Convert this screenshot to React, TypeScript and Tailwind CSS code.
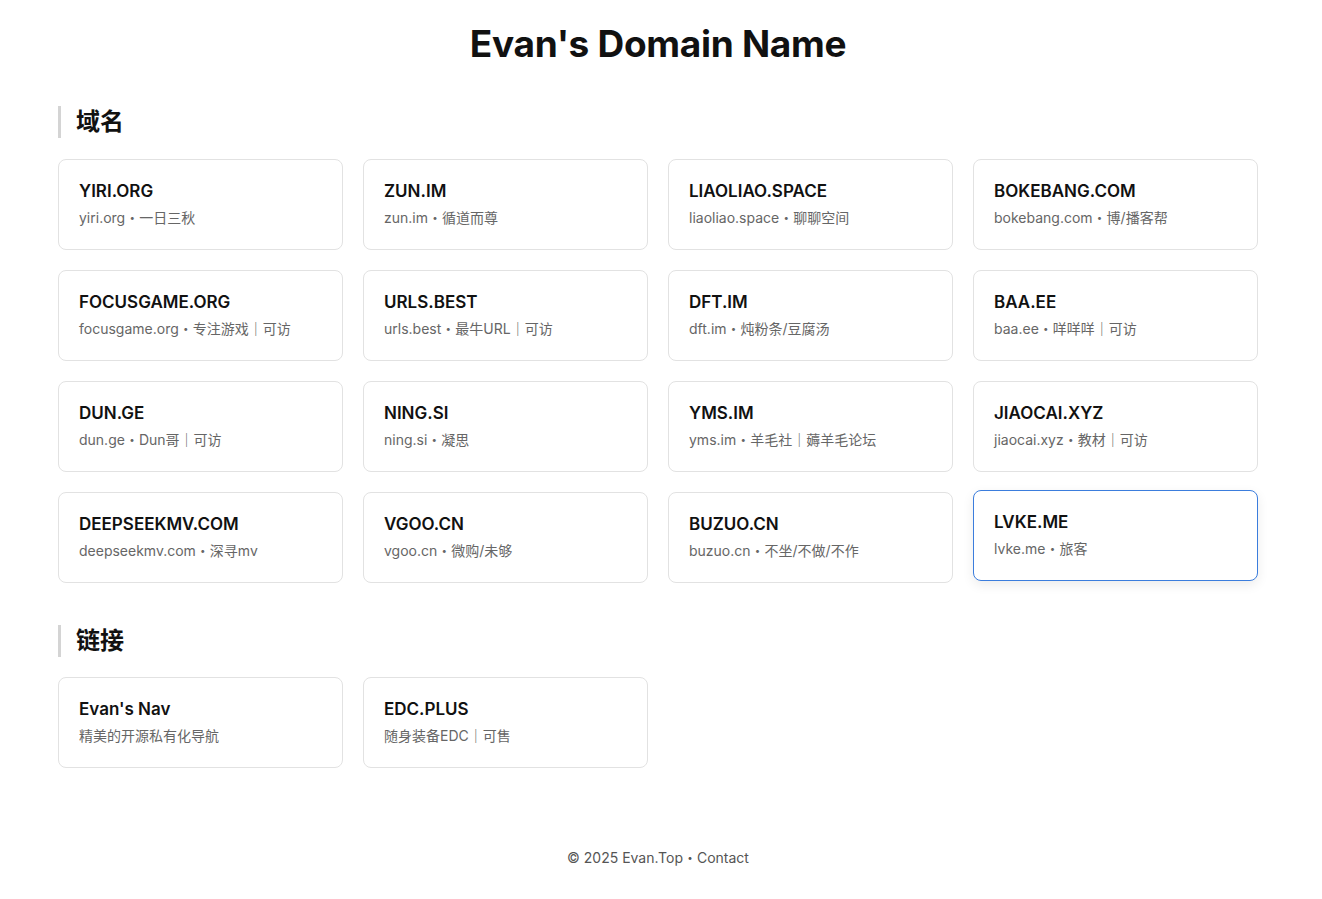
import React from "react";

type Item = { title: string; desc: string; hover?: boolean };

const domains: Item[] = [
  { title: "YIRI.ORG", desc: "yiri.org・一日三秋" },
  { title: "ZUN.IM", desc: "zun.im・循道而尊" },
  { title: "LIAOLIAO.SPACE", desc: "liaoliao.space・聊聊空间" },
  { title: "BOKEBANG.COM", desc: "bokebang.com・博/播客帮" },
  { title: "FOCUSGAME.ORG", desc: "focusgame.org・专注游戏｜可访" },
  { title: "URLS.BEST", desc: "urls.best・最牛URL｜可访" },
  { title: "DFT.IM", desc: "dft.im・炖粉条/豆腐汤" },
  { title: "BAA.EE", desc: "baa.ee・咩咩咩｜可访" },
  { title: "DUN.GE", desc: "dun.ge・Dun哥｜可访" },
  { title: "NING.SI", desc: "ning.si・凝思" },
  { title: "YMS.IM", desc: "yms.im・羊毛社｜薅羊毛论坛" },
  { title: "JIAOCAI.XYZ", desc: "jiaocai.xyz・教材｜可访" },
  { title: "DEEPSEEKMV.COM", desc: "deepseekmv.com・深寻mv" },
  { title: "VGOO.CN", desc: "vgoo.cn・微购/未够" },
  { title: "BUZUO.CN", desc: "buzuo.cn・不坐/不做/不作" },
  { title: "LVKE.ME", desc: "lvke.me・旅客", hover: true },
];

const links: Item[] = [
  { title: "Evan's Nav", desc: "精美的开源私有化导航" },
  { title: "EDC.PLUS", desc: "随身装备EDC｜可售" },
];

function Card({ item }: { item: Item }) {
  return (
    <div
      className={
        item.hover
          ? "flex h-[91px] flex-col rounded-lg border border-[#3b7ddd] bg-white px-5 pt-[19px] -translate-y-[2px] shadow-[0_4px_12px_rgba(0,0,0,0.08)]"
          : "flex h-[91px] flex-col rounded-lg border border-[#e2e2e2] bg-white px-5 pt-[19px]"
      }
    >
      <div className="text-[17px] font-semibold leading-[24px] text-[#111]">{item.title}</div>
      <div className="mt-[5px] text-[14px] leading-[20px] text-[#666]">{item.desc}</div>
    </div>
  );
}

function Heading({ children }: { children: React.ReactNode }) {
  return (
    <div className="flex h-[32px] items-center border-l-[3px] border-[#d4d4d4] pl-[15px] text-[24px] font-bold leading-[32px] text-[#111]">
      {children}
    </div>
  );
}

export default function App() {
  return (
    <div
      className="min-h-screen bg-white"
      style={{ fontFamily: 'Inter, "Noto Sans CJK SC", sans-serif' }}
    >
      <div className="ml-[58px] w-[1200px] pt-[20px]">
        <h1 className="text-center text-[37px] font-bold leading-[48px] tracking-[-0.3px] text-[#111]">
          Evan's Domain Name
        </h1>
        <div className="mt-[38px]">
          <Heading>域名</Heading>
        </div>
        <div className="mt-[21px] grid grid-cols-4 gap-x-5 gap-y-5">
          {domains.map((d) => (
            <Card key={d.title} item={d} />
          ))}
        </div>
        <div className="mt-[42px]">
          <Heading>链接</Heading>
        </div>
        <div className="mt-[20px] grid grid-cols-4 gap-x-5 gap-y-5">
          {links.map((d) => (
            <Card key={d.title} item={d} />
          ))}
        </div>
        <div className="mt-[80px] text-center text-[14px] leading-[20px] text-[#555]">
          © 2025 Evan.Top・Contact
        </div>
      </div>
    </div>
  );
}
